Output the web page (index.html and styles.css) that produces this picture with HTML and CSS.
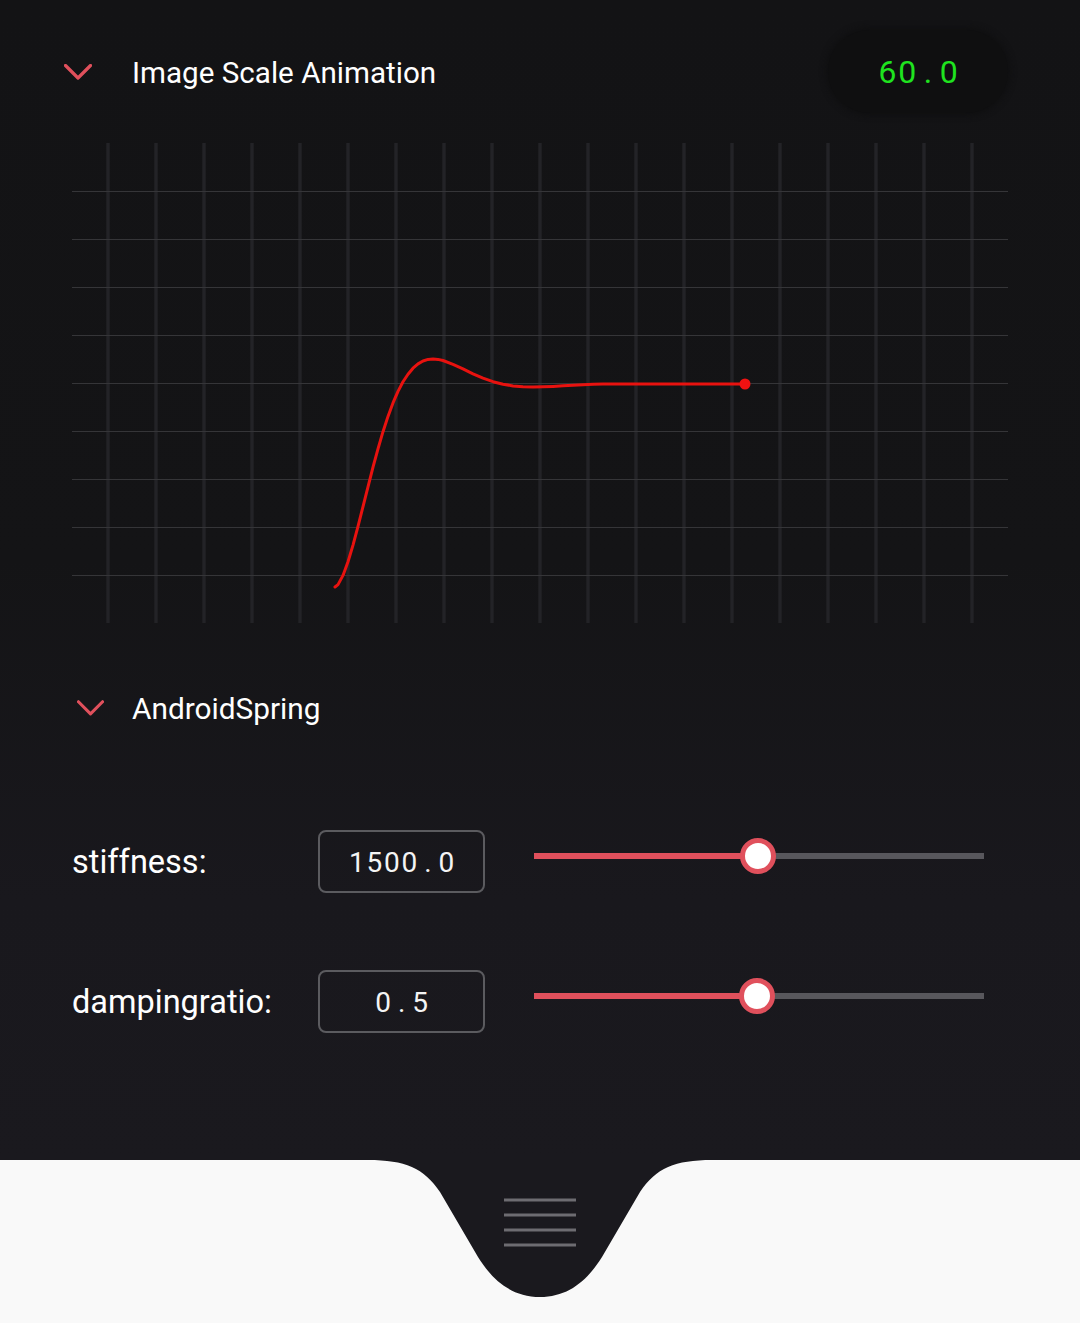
FILE: index.html
```html
<!DOCTYPE html>
<html lang="en">
<head>
<meta charset="utf-8">
<title>Image Scale Animation</title>
<link rel="stylesheet" href="styles.css">
</head>
<body>
<div class="screen">
  <header class="head">
    <svg class="chev" width="28" height="16" viewBox="0 0 28 16"><path d="M1.5 1.5 L14 14 L26.5 1.5" fill="none" stroke="#e0505c" stroke-width="3.2" stroke-linecap="round" stroke-linejoin="round"/></svg>
    <h1 class="title">Image Scale Animation</h1>
    <div class="fps mono">60<span class="dot">.</span>0</div>
  </header>

  <div class="chart">
    <svg width="936" height="480" viewBox="0 0 936 480">
      <g stroke="#1e1e21" stroke-width="4">
        <line x1="36" y1="0" x2="36" y2="480"/><line x1="84" y1="0" x2="84" y2="480"/><line x1="132" y1="0" x2="132" y2="480"/><line x1="180" y1="0" x2="180" y2="480"/><line x1="228" y1="0" x2="228" y2="480"/><line x1="276" y1="0" x2="276" y2="480"/><line x1="324" y1="0" x2="324" y2="480"/><line x1="372" y1="0" x2="372" y2="480"/><line x1="420" y1="0" x2="420" y2="480"/><line x1="468" y1="0" x2="468" y2="480"/><line x1="516" y1="0" x2="516" y2="480"/><line x1="564" y1="0" x2="564" y2="480"/><line x1="612" y1="0" x2="612" y2="480"/><line x1="660" y1="0" x2="660" y2="480"/><line x1="708" y1="0" x2="708" y2="480"/><line x1="756" y1="0" x2="756" y2="480"/><line x1="804" y1="0" x2="804" y2="480"/><line x1="852" y1="0" x2="852" y2="480"/><line x1="900" y1="0" x2="900" y2="480"/>
      </g>
      <g stroke="#26262a" stroke-width="1.5">
        <line x1="36" y1="0" x2="36" y2="480"/><line x1="84" y1="0" x2="84" y2="480"/><line x1="132" y1="0" x2="132" y2="480"/><line x1="180" y1="0" x2="180" y2="480"/><line x1="228" y1="0" x2="228" y2="480"/><line x1="276" y1="0" x2="276" y2="480"/><line x1="324" y1="0" x2="324" y2="480"/><line x1="372" y1="0" x2="372" y2="480"/><line x1="420" y1="0" x2="420" y2="480"/><line x1="468" y1="0" x2="468" y2="480"/><line x1="516" y1="0" x2="516" y2="480"/><line x1="564" y1="0" x2="564" y2="480"/><line x1="612" y1="0" x2="612" y2="480"/><line x1="660" y1="0" x2="660" y2="480"/><line x1="708" y1="0" x2="708" y2="480"/><line x1="756" y1="0" x2="756" y2="480"/><line x1="804" y1="0" x2="804" y2="480"/><line x1="852" y1="0" x2="852" y2="480"/><line x1="900" y1="0" x2="900" y2="480"/>
      </g>
      <g stroke="#353538" stroke-width="1">
        <line x1="0" y1="48.5" x2="936" y2="48.5"/><line x1="0" y1="96.5" x2="936" y2="96.5"/><line x1="0" y1="144.5" x2="936" y2="144.5"/><line x1="0" y1="192.5" x2="936" y2="192.5"/><line x1="0" y1="240.5" x2="936" y2="240.5"/><line x1="0" y1="288.5" x2="936" y2="288.5"/><line x1="0" y1="336.5" x2="936" y2="336.5"/><line x1="0" y1="384.5" x2="936" y2="384.5"/><line x1="0" y1="432.5" x2="936" y2="432.5"/>
      </g>
      <polyline fill="none" stroke="#e8120f" stroke-width="3" stroke-linecap="round" stroke-linejoin="round"
        points="263,444 266,441.6 271,432.4 276,418.8 281,402.1 286,383.4 291,363.6 296,343.8 301,324.2 306,305.8 311,288.7 316,273.4 321,259.9 326,248.4 331,238.8 336,231.2 341,225.2 346,220.9 351,218 356,216.4 361,216 366,216.4 371,217.5 381,221.3 391,225.9 401,230.8 411,235.2 421,238.7 431,241.2 441,242.9 451,243.8 461,244 471,243.8 481,243.4 491,242.8 501,242.2 511,241.7 521,241.3 531,241.1 541,241 673,241"/>
      <circle cx="673" cy="241" r="5.5" fill="#f01212"/>
    </svg>
  </div>

  <div class="section">
    <svg class="chev" width="28" height="16" viewBox="0 0 28 16"><path d="M1.5 1.5 L14 14 L26.5 1.5" fill="none" stroke="#e0505c" stroke-width="3.2" stroke-linecap="round" stroke-linejoin="round"/></svg>
    <h2 class="section-title">AndroidSpring</h2>
  </div>

  <div class="params">
    <div class="param">
      <span class="label">stiffness:</span>
      <div class="value mono">1500<span class="dot">.</span>0</div>
      <div class="slider" style="--v: 224px">
        <div class="track-on"></div>
        <div class="track-off"></div>
        <div class="thumb"></div>
      </div>
    </div>
    <div class="param">
      <span class="label">dampingratio:</span>
      <div class="value mono">0<span class="dot">.</span>5</div>
      <div class="slider" style="--v: 223px">
        <div class="track-on"></div>
        <div class="track-off"></div>
        <div class="thumb"></div>
      </div>
    </div>
  </div>

  <footer class="bottom">
    <svg width="1080" height="163" viewBox="0 0 1080 163">
      <path d="M0 0 H368 C405 0 424 8 440 32 L478 97 C493 121 512 137 540 137 C568 137 587 121 602 97 L640 32 C656 8 675 0 712 0 H1080 V163 H0 Z" fill="#f9f9f9"/>
      <g stroke="#6d6c71" stroke-width="3">
        <line x1="504" y1="40" x2="576" y2="40"/>
        <line x1="504" y1="55" x2="576" y2="55"/>
        <line x1="504" y1="70" x2="576" y2="70"/>
        <line x1="504" y1="85" x2="576" y2="85"/>
      </g>
    </svg>
  </footer>
</div>
</body>
</html>
```

FILE: styles.css
```css
* { box-sizing: border-box; }

html, body {
  margin: 0;
  padding: 0;
}

body {
  background: #131315;
  font-family: Roboto, "Noto Sans", "Liberation Sans", sans-serif;
  color: #ffffff;
}

.screen {
  width: 1080px;
  height: 1323px;
  display: flex;
  flex-direction: column;
  padding-top: 30px;
  background: linear-gradient(180deg, #131315 0px, #141416 560px, #19181d 900px, #1a191e 1160px);
  overflow: hidden;
}

.head {
  height: 83px;
  display: flex;
  align-items: center;
  padding-left: 64px;
  padding-right: 72px;
}

.chev {
  display: block;
  flex: none;
}

.title {
  margin: 0 0 0 40px;
  font-size: 29.6px;
  font-weight: 400;
  flex: 1;
  padding-top: 2px;
}

.mono {
  font-family: Roboto, "Noto Sans", sans-serif;
  font-variant-numeric: tabular-nums;
}

.dot {
  display: inline-block;
  text-align: center;
}

.fps {
  width: 180px;
  height: 83px;
  border-radius: 42px;
  background: #0f0f10;
  box-shadow: 0 0 6px 2px #0f0f10;
  display: flex;
  align-items: center;
  justify-content: center;
  font-size: 32px;
  letter-spacing: 1.8px;
  color: #1fe31f;
  padding-left: 2px;
}

.fps .dot {
  width: 20px;
  letter-spacing: 0;
  margin-right: 1.8px;
}

.chart {
  margin-top: 30px;
  margin-left: 72px;
  width: 936px;
  height: 480px;
}

.chart svg {
  display: block;
}

.section {
  margin-top: 55px;
  height: 60px;
  display: flex;
  align-items: center;
  padding-left: 77px;
}

.section .chev {
  width: 27px;
}

.section-title {
  margin: 0 0 0 28px;
  font-size: 29.8px;
  font-weight: 400;
}

.params {
  margin-top: 92px;
  display: flex;
  flex-direction: column;
  gap: 77px;
  padding-left: 72px;
}

.param {
  height: 63px;
  display: flex;
  align-items: center;
}

.label {
  width: 246px;
  font-size: 32.5px;
}

.value {
  width: 167px;
  height: 63px;
  border: 2px solid #5b5b5f;
  border-radius: 8px;
  display: flex;
  align-items: center;
  justify-content: center;
  font-size: 28px;
  letter-spacing: 1.8px;
  color: #f4f4f4;
  padding-top: 2px;
  padding-left: 2px;
}

.value .dot {
  width: 17.5px;
  letter-spacing: 0;
  margin-right: 1.8px;
}

.slider {
  margin-left: 49px;
  width: 450px;
  height: 36px;
  margin-bottom: 11px;
  position: relative;
  display: flex;
  align-items: center;
}

.track-on {
  width: var(--v);
  height: 6px;
  background: #e0505c;
}

.track-off {
  flex: 1;
  height: 6px;
  background: #58575c;
}

.thumb {
  position: absolute;
  top: 0;
  left: calc(var(--v) - 18px);
  width: 36px;
  height: 36px;
  border-radius: 50%;
  background: #ffffff;
  border: 5px solid #e0505c;
}

.bottom {
  margin-top: auto;
  height: 163px;
}

.bottom svg {
  display: block;
}
```
